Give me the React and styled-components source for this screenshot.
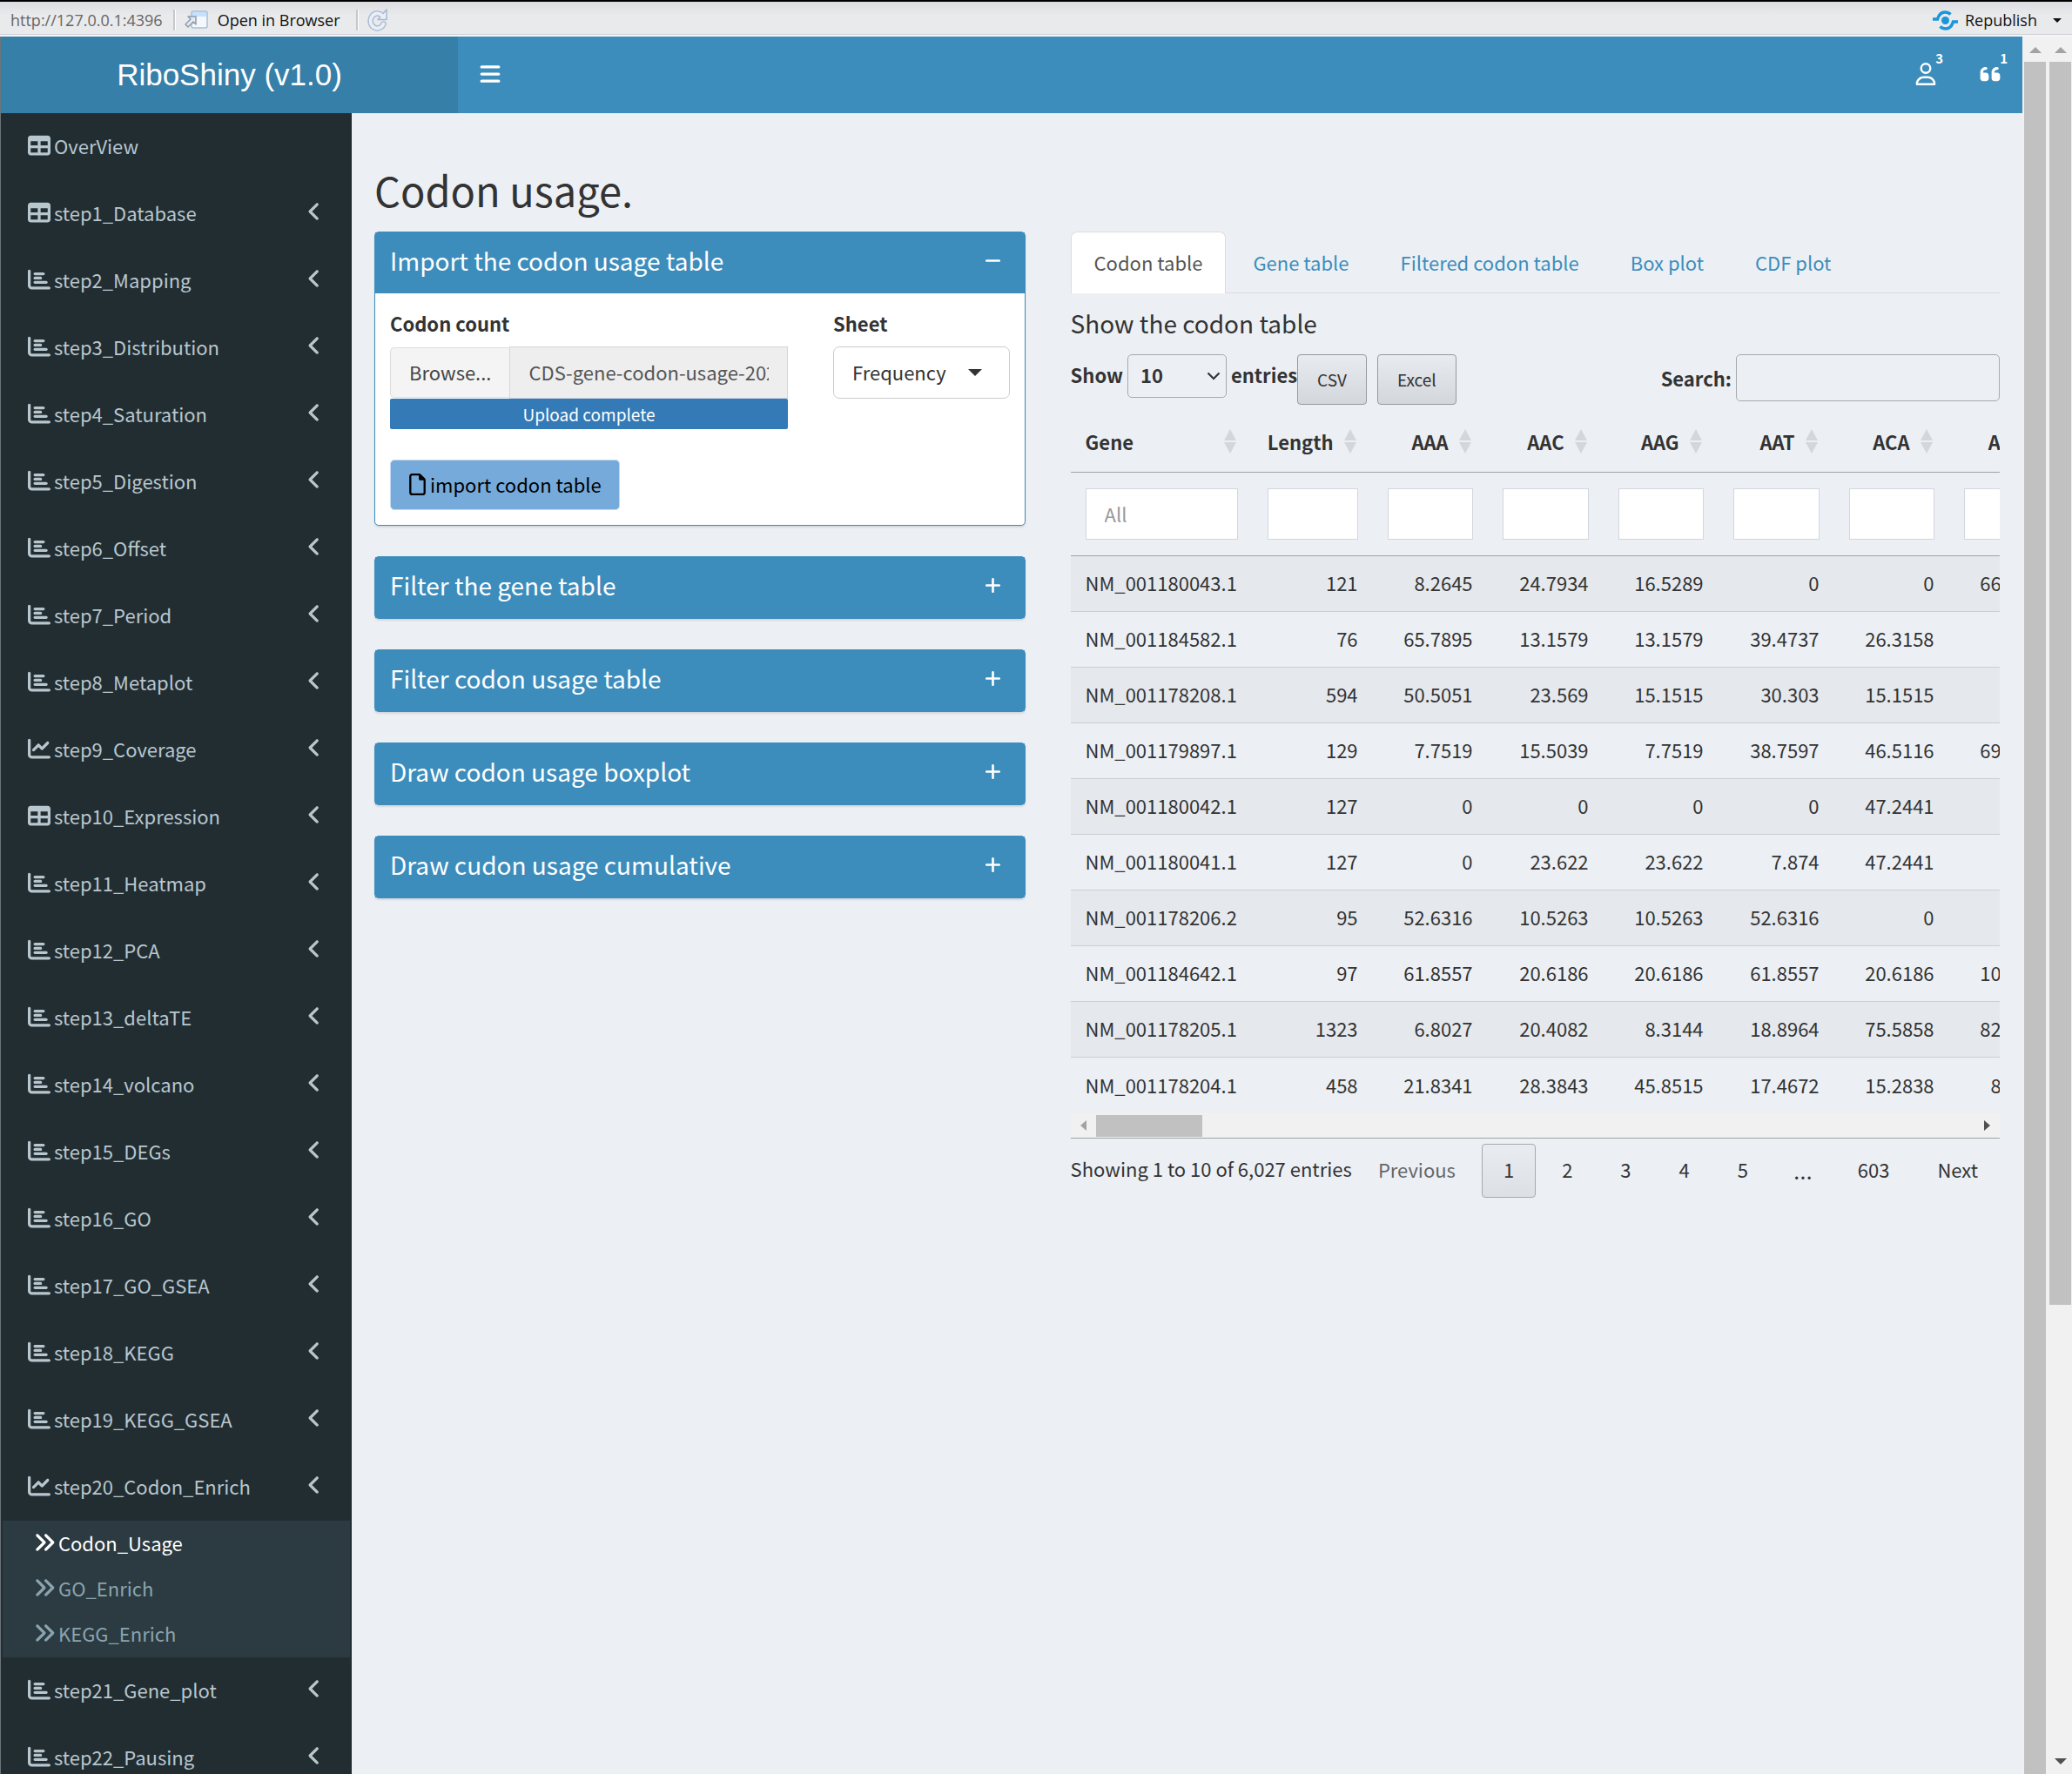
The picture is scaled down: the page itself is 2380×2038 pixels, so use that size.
import React from "react";
import styled, { createGlobalStyle, css } from "styled-components";
import {
  FaTable,
  FaChartBar,
  FaChartLine,
  FaAngleLeft,
  FaAnglesRight,
  FaBars,
  FaRegUser,
  FaQuoteLeft,
  FaMinus,
  FaPlus,
  FaRegFile,
} from "react-icons/fa6";

const sans = `"Noto Sans CJK SC", "Noto Sans", sans-serif`;

const GlobalStyle = createGlobalStyle`
  *, *::before, *::after { box-sizing: border-box; }
  body {
    margin: 0;
    background: #ecf0f5;
    color: #333;
    font-family: ${sans};
    font-size: 22px;
    line-height: 35px;
  }
  button, input, select { font: inherit; color: inherit; margin: 0; }
  a { text-decoration: none; }
`;

/* ---------- window frame ---------- */

const Window = styled.div`
  height: 100vh;
  display: flex;
  flex-direction: column;
  overflow: hidden;
  border-top: 2px solid #000;
`;

const Toolbar = styled.div`
  flex: none;
  display: flex;
  align-items: center;
  height: 40px;
  padding: 4px 12px 0 12px;
  background: linear-gradient(#dcdde1, #e9eaec 40%, #e9eaec);
  border-bottom: 2px solid #f4f5f7;
  box-shadow: inset 0 -1px 0 #cfd0d3;
  font-family: "Open Sans", sans-serif;
  font-size: 18px;
  line-height: 28px;
  color: #111;
`;

const Address = styled.span`
  color: #666;
`;

const Divider = styled.span`
  width: 3px;
  height: 24px;
  margin: 0 10px 0 12px;
  border-left: 2px solid #c6c7ca;
  border-right: 1px solid #fff;
`;

const ToolButton = styled.button`
  display: flex;
  align-items: center;
  gap: ${(p) => p.$gap || 10}px;
  height: 32px;
  padding: ${(p) => (p.$end ? 0 : "0 6px 0 0")};
  border: 0;
  background: none;
  margin-left: ${(p) => (p.$end ? "auto" : 0)};
`;

const Caret = styled.span`
  width: 0;
  height: 0;
  margin-left: ${(p) => p.$gap || 0}px;
  border: ${(p) => p.$size || 5}px solid transparent;
  border-top-color: currentColor;
  border-bottom: 0;
`;

const Body = styled.div`
  flex: 1;
  min-height: 0;
  display: flex;
`;

const Dashboard = styled.div`
  flex: 1;
  min-width: 0;
  display: flex;
  flex-direction: column;
  border-left: 1px solid #6b7478;
`;

/* ---------- scroll bars ---------- */

const VScroll = styled.div`
  flex: none;
  width: ${(p) => p.$width}px;
  padding: 12px 1px ${(p) => (p.$cut ? 0 : 11)}px ${(p) => p.$width - 26}px;
  display: flex;
  flex-direction: column;
  align-items: center;
  background: #f1f1f1;
`;

const VThumb = styled.div`
  width: 25px;
  flex: ${(p) => p.$grow} 0 0;
  margin-top: 10px;
  background: #c1c1c1;
`;

const VRest = styled.div`
  flex: ${(p) => p.$grow} 0 0;
`;

const ArrowUp = styled.span`
  border: 7px solid transparent;
  border-bottom-color: #a3a3a3;
  border-top: 0;
`;

const ArrowDown = styled.span`
  border: 7px solid transparent;
  border-top-color: #505050;
  border-bottom: 0;
`;

/* ---------- header ---------- */

const Header = styled.header`
  flex: none;
  display: flex;
  height: 88px;
  background: #3c8dbc;
  color: #fff;
`;

const Logo = styled.a`
  width: 525px;
  background: #367fa9;
  color: #fff;
  text-align: center;
  font: 35px/88px "Liberation Sans", Arial, sans-serif;
`;

const NavButton = styled.button`
  position: relative;
  display: flex;
  align-items: center;
  padding: 0 24px 2px;
  border: 0;
  background: none;
  color: #fff;
  font-size: 26px;
`;

const NavRight = styled.nav`
  display: flex;
  margin-left: auto;
`;

const Badge = styled.span`
  position: absolute;
  top: 15px;
  right: 17px;
  font-size: 15px;
  line-height: 20px;
  font-weight: 700;
`;

const Main = styled.div`
  flex: 1;
  min-height: 0;
  display: flex;
`;

/* ---------- sidebar ---------- */

const Sidebar = styled.nav`
  flex: none;
  width: 403px;
  overflow: hidden;
  background: #222d32;
`;

const Menu = styled.ul`
  list-style: none;
  margin: 0;
  padding: 0;
`;

const MenuLink = styled.a`
  display: flex;
  align-items: center;
  gap: 4px;
  height: 77px;
  padding: 0 30px 3px 31px;
  color: #b8c7ce;

  svg { flex: none; font-size: 26px; }
  span { flex: 1; }
  span + svg { margin-bottom: 3px; }
`;

const SubMenu = styled.ul`
  list-style: none;
  margin: 0 2px;
  padding: 0 0 1px;
  background: #2c3b41;
`;

const SubLink = styled.a`
  display: flex;
  align-items: center;
  gap: 3px;
  height: 52px;
  padding: 0 0 2px 35px;
  color: ${(p) => (p.$active ? "#fff" : "#8aa4af")};

  svg { font-size: 26px; }
`;

/* ---------- content ---------- */

const Content = styled.main`
  flex: 1;
  min-width: 0;
  padding-top: 59px;
`;

const PageTitle = styled.h2`
  margin: 0;
  padding: 0 26px;
  font-size: 47px;
  line-height: 58px;
  font-weight: 400;
`;

const Columns = styled.div`
  display: grid;
  grid-template-columns: 5fr 7fr;
  padding-top: 19px;
`;

const Column = styled.div`
  min-width: 0;
  padding: 0 26px;
`;

const Box = styled.section`
  margin-bottom: 35px;
  border: 1px solid #3c8dbc;
  border-radius: 5px;
  background: #fff;
  box-shadow: 0 2px 2px rgba(0, 0, 0, 0.1);
`;

const BoxHeader = styled.div`
  display: flex;
  justify-content: space-between;
  align-items: center;
  height: 70px;
  padding: 0 26px 5px 17px;
  background: #3c8dbc;
  color: #fff;
`;

const BoxTitle = styled.h3`
  margin: 0;
  padding-bottom: 2px;
  font-size: 28px;
  line-height: 36px;
  font-weight: 400;
`;

const BoxTool = styled.button`
  display: flex;
  padding: 0;
  border: 0;
  background: none;
  color: #fff;
  font-size: 21px;
`;

const BoxBody = styled.div`
  padding: 17px;
`;

const FormRow = styled.div`
  display: grid;
  grid-template-columns: 2fr 1fr;
  margin: 0 -26px 35px;
`;

const Field = styled.div`
  min-width: 0;
  padding: 0 26px;
`;

const Label = styled.label`
  display: block;
  margin-bottom: 9px;
  font-weight: 700;
`;

const FileGroup = styled.div`
  display: flex;
  align-items: center;
`;

const Browse = styled.button`
  height: 58px;
  padding: 0 21px 2px;
  border: 1px solid #ddd;
  border-right: 0;
  border-radius: 5px 0 0 5px;
  background: #f4f4f4;
  color: #444;
`;

const FileName = styled.input`
  flex: 1;
  min-width: 0;
  height: 60px;
  padding: 0 21px 2px;
  border: 1px solid #d2d6de;
  border-radius: 0;
  background: #eee;
  color: #555;
`;

const Progress = styled.div`
  height: 35px;
  border-radius: 2px;
  background: #337ab7;
  color: #fff;
  text-align: center;
  font-size: 19px;
`;

const SelectWrap = styled.div`
  position: relative;
  display: ${(p) => (p.$inline ? "inline-block" : "block")};
`;

const SelectMark = styled.span`
  position: absolute;
  top: 0;
  bottom: 0;
  right: ${(p) => p.$right}px;
  display: flex;
  align-items: center;
  pointer-events: none;
`;

const SheetSelect = styled.select`
  width: 100%;
  height: 60px;
  padding: 0 21px 2px;
  border: 1px solid #ccc;
  border-radius: 7px;
  background: #fff;
  appearance: none;
`;

const ImportButton = styled.button`
  display: flex;
  align-items: center;
  gap: 2px;
  height: 58px;
  padding: 0 20px 2px 18px;
  border: 1px solid #c3d9ef;
  border-radius: 5px;
  background: #75aadb;
  color: #000;

  svg { font-size: 25px; }
`;

/* ---------- tabs ---------- */

const Tabs = styled.div`
  display: flex;
  gap: 3px;
  border-bottom: 1px solid #d9dce1;
`;

const Tab = styled.button`
  height: 71px;
  padding: 0 26px 2px;
  margin-bottom: -1px;
  border: 1px solid transparent;
  border-bottom: 0;
  border-radius: 7px 7px 0 0;
  background: none;
  color: #3c8dbc;
  & + & { padding: 0 27px 2px; }
  ${(p) =>
    p.$active &&
    css`
      border-color: #ddd;
      background: #fff;
      color: #555;
    `}
`;

const Subtitle = styled.h4`
  margin: 15px 0 17px;
  font-size: 28px;
  line-height: 38px;
  font-weight: 400;
`;

/* ---------- data table ---------- */

const Controls = styled.div`
  display: flex;
  align-items: flex-start;
  height: 66px;
  font-weight: 700;
`;

const LengthLabel = styled.label`
  display: flex;
  align-items: baseline;
  gap: 5px;
`;

const LengthSelect = styled.select`
  display: block;
  width: 114px;
  height: 50px;
  padding: 0 14px 3px;
  border: 1px solid #a6a9ad;
  border-radius: 5px;
  background: none;
  appearance: none;
`;

const ExportButton = styled.button`
  height: 58px;
  padding: 0 22px 2px;
  margin-right: 12px;
  border: 1px solid #96999d;
  border-radius: 4px;
  background: linear-gradient(#e8ebf0, #d3d6db);
  font-size: 19px;
  font-weight: 400;
`;

const SearchLabel = styled.label`
  display: flex;
  align-items: center;
  gap: 5px;
  margin-left: auto;
`;

const SearchInput = styled.input`
  width: 303px;
  height: 54px;
  padding: 0 9px;
  border: 1px solid #a6a9ad;
  border-radius: 5px;
  background: none;
`;

const TableWindow = styled.div`
  overflow: hidden;
`;

const Table = styled.table`
  width: 0;
  table-layout: fixed;
  border-collapse: separate;
  border-spacing: 0;
`;

const Col = styled.col`
  width: ${(p) => p.$width}px;
`;

const Th = styled.th`
  height: 70px;
  padding: 0 19px 1px 17px;
  border-bottom: 1px solid #a0a3a8;
`;

const ThInner = styled.div`
  display: flex;
  align-items: center;
  justify-content: ${(p) => (p.$left ? "space-between" : "flex-end")};
  gap: 12px;
`;

const Sort = styled.span`
  display: flex;
  flex-direction: column;
  gap: 2px;

  &::before, &::after {
    content: "";
    border: 7px solid transparent;
  }
  &::before { border-top: 0; border-bottom: 13px solid #d3d6db; }
  &::after { border-bottom: 0; border-top: 13px solid #d3d6db; }
`;

const FilterCell = styled.td`
  height: 96px;
  padding: 0 17px;
  border-bottom: 1px solid #a0a3a8;
`;

const FilterInput = styled.input`
  display: block;
  width: 100%;
  height: 59px;
  padding: 0 21px 2px;
  border: 1px solid #d2d6de;
  border-radius: 0;
  background: #fff;
  &::placeholder { color: #999; opacity: 1; }
`;

const Tr = styled.tr`
  background: ${(p) => (p.$odd ? "#e5e9ed" : "transparent")};
`;

const Td = styled.td`
  height: 64px;
  padding: 0 17px 2px;
  border-bottom: ${(p) => (p.$last ? 0 : 1)}px solid #cbced3;
  text-align: ${(p) => (p.$left ? "left" : "right")};
`;

const HScroll = styled.div`
  display: flex;
  align-items: center;
  gap: 11px;
  height: 28px;
  padding: 0 11px;
  background: #f1f1f1;
`;

const HThumb = styled.div`
  width: 122px;
  height: 25px;
  margin-right: auto;
  background: #c1c1c1;
`;

const ArrowSide = styled.span`
  border: 6px solid transparent;
  ${(p) =>
    p.$right
      ? "border-left: 7px solid #505050; border-right: 0;"
      : "border-right: 7px solid #a3a3a3; border-left: 0;"}
`;

const TableFooter = styled.div`
  display: flex;
  justify-content: space-between;
  align-items: center;
  padding-top: 6px;
  border-top: 1px solid #a0a3a7;
`;

const Info = styled.span`
  padding-bottom: 6px;
`;

const Pager = styled.div`
  display: flex;
  align-items: center;
  gap: 5px;
`;

const Page = styled.button`
  height: 62px;
  padding: 0 24px 3px;
  border: 1px solid transparent;
  border-radius: 4px;
  background: none;
  color: ${(p) => (p.disabled ? "#666" : "#333")};
  ${(p) =>
    p.$current &&
    css`
      border-color: #a6a9ad;
      background: linear-gradient(#e9ecf1, #dcdfe4);
    `}
`;

const Ellipsis = styled.span`
  padding: 0 22px 2px;
  font-family: "Open Sans", sans-serif;
  font-size: 28px;
`;

/* ---------- drawings ---------- */

const OpenIcon = () => (
  <svg width="28" height="22" viewBox="0 0 28 22">
    <rect x="8" y="1" width="18" height="19" rx="2" fill="#f4f8fc" stroke="#a9bdd4" strokeWidth="1.5" />
    <path d="M9 2h16v5H9z" fill="#c4e2fb" />
    <path
      d="M4 7h9v9l-3-3-6 6-3-3 6-6z"
      fill="#e6ebf0"
      stroke="#8e9cad"
      strokeWidth="1.5"
      strokeLinejoin="round"
    />
  </svg>
);

const ReloadIcon = () => (
  <svg width="26" height="28" viewBox="0 0 26 28">
    <path
      d="M16.5 8.500A7.800 8.500 0 1 0 18.500 18.500"
      fill="none"
      stroke="#a9b8cf"
      strokeWidth="6.5"
      strokeLinecap="round"
    />
    <path
      d="M22 2v11.500H12l3.500-4z"
      fill="#e8eff9"
      stroke="#a9b8cf"
      strokeWidth="1.5"
      strokeLinejoin="round"
    />
    <path
      d="M16.5 8.500A7.800 8.500 0 1 0 18.500 18.500"
      fill="none"
      stroke="#e8eff9"
      strokeWidth="3.8"
      strokeLinecap="round"
    />
  </svg>
);

const PublishIcon = () => (
  <svg width="29" height="23" viewBox="0 0 29 23">
    <circle cx="14.5" cy="11.5" r="4.5" fill="#1a96dc" />
    <path
      d="M0 10h5.500C7 5 10 2 14 2c3 0 5 1 6.500 2.500M29 13h-5.500C22 18 19 21 15 21c-3 0-5-1-6.500-2.500"
      fill="none"
      stroke="#1a96dc"
      strokeWidth="3.5"
    />
  </svg>
);

const DownMark = () => (
  <svg width="16" height="10" viewBox="0 0 16 10">
    <path d="M1.500 1.500L8 8l6.500-6.500" fill="none" stroke="#333" strokeWidth="2.2" />
  </svg>
);

/* ---------- data ---------- */

const menu = [
  ["OverView", FaTable],
  ["step1_Database", FaTable],
  ["step2_Mapping", FaChartBar],
  ["step3_Distribution", FaChartBar],
  ["step4_Saturation", FaChartBar],
  ["step5_Digestion", FaChartBar],
  ["step6_Offset", FaChartBar],
  ["step7_Period", FaChartBar],
  ["step8_Metaplot", FaChartBar],
  ["step9_Coverage", FaChartLine],
  ["step10_Expression", FaTable],
  ["step11_Heatmap", FaChartBar],
  ["step12_PCA", FaChartBar],
  ["step13_deltaTE", FaChartBar],
  ["step14_volcano", FaChartBar],
  ["step15_DEGs", FaChartBar],
  ["step16_GO", FaChartBar],
  ["step17_GO_GSEA", FaChartBar],
  ["step18_KEGG", FaChartBar],
  ["step19_KEGG_GSEA", FaChartBar],
  ["step20_Codon_Enrich", FaChartLine, ["Codon_Usage", "GO_Enrich", "KEGG_Enrich"]],
  ["step21_Gene_plot", FaChartBar],
  ["step22_Pausing", FaChartBar],
];

const closedBoxes = [
  "Filter the gene table",
  "Filter codon usage table",
  "Draw codon usage boxplot",
  "Draw cudon usage cumulative",
];

const tabs = ["Codon table", "Gene table", "Filtered codon table", "Box plot", "CDF plot"];

const columns = [
  ["Gene", 209],
  ["Length", 138],
  ["AAA", 132],
  ["AAC", 133],
  ["AAG", 132],
  ["AAT", 133],
  ["ACA", 132],
  ["ACC", 132],
];

const rows = [
  ["NM_001180043.1", "121", "8.2645", "24.7934", "16.5289", "0", "0", "66.1157"],
  ["NM_001184582.1", "76", "65.7895", "13.1579", "13.1579", "39.4737", "26.3158", ""],
  ["NM_001178208.1", "594", "50.5051", "23.569", "15.1515", "30.303", "15.1515", ""],
  ["NM_001179897.1", "129", "7.7519", "15.5039", "7.7519", "38.7597", "46.5116", "69.7674"],
  ["NM_001180042.1", "127", "0", "0", "0", "0", "47.2441", ""],
  ["NM_001180041.1", "127", "0", "23.622", "23.622", "7.874", "47.2441", ""],
  ["NM_001178206.2", "95", "52.6316", "10.5263", "10.5263", "52.6316", "0", ""],
  ["NM_001184642.1", "97", "61.8557", "20.6186", "20.6186", "61.8557", "20.6186", "10.3093"],
  ["NM_001178205.1", "1323", "6.8027", "20.4082", "8.3144", "18.8964", "75.5858", "82.3885"],
  ["NM_001178204.1", "458", "21.8341", "28.3843", "45.8515", "17.4672", "15.2838", "8.7336"],
];

/* ---------- page ---------- */

function MenuEntry({ label, Icon, items }) {
  return (
    <li>
      <MenuLink href="#">
        <Icon />
        <span>{label}</span>
        {label !== "OverView" && <FaAngleLeft />}
      </MenuLink>
      {items && (
        <SubMenu>
          {items.map((item, i) => (
            <li key={item}>
              <SubLink href="#" $active={i === 0}>
                <FaAnglesRight />
                {item}
              </SubLink>
            </li>
          ))}
        </SubMenu>
      )}
    </li>
  );
}

function ImportBox() {
  return (
    <Box>
      <BoxHeader>
        <BoxTitle>Import the codon usage table</BoxTitle>
        <BoxTool aria-label="Collapse"><FaMinus /></BoxTool>
      </BoxHeader>
      <BoxBody>
        <FormRow>
          <Field>
            <Label htmlFor="codon-file">Codon count</Label>
            <FileGroup>
              <Browse>Browse...</Browse>
              <FileName id="codon-file" readOnly value="CDS-gene-codon-usage-2023.xlsx" />
            </FileGroup>
            <Progress>Upload complete</Progress>
          </Field>
          <Field>
            <Label htmlFor="sheet">Sheet</Label>
            <SelectWrap>
              <SheetSelect id="sheet" defaultValue="Frequency">
                <option>Frequency</option>
              </SheetSelect>
              <SelectMark $right={32}><Caret $size={8} /></SelectMark>
            </SelectWrap>
          </Field>
        </FormRow>
        <ImportButton><FaRegFile />import codon table</ImportButton>
      </BoxBody>
    </Box>
  );
}

function CodonTable() {
  return (
    <>
      <Controls>
        <LengthLabel>
          Show
          <SelectWrap $inline>
            <LengthSelect defaultValue="10"><option>10</option></LengthSelect>
            <SelectMark $right={7}><DownMark /></SelectMark>
          </SelectWrap>
          entries
        </LengthLabel>
        <ExportButton>CSV</ExportButton>
        <ExportButton>Excel</ExportButton>
        <SearchLabel>Search:<SearchInput type="search" /></SearchLabel>
      </Controls>
      <TableWindow>
        <Table>
          <colgroup>
            {columns.map(([name, width]) => <Col key={name} $width={width} />)}
          </colgroup>
          <thead>
            <tr>
              {columns.map(([name], i) => (
                <Th key={name}>
                  <ThInner $left={i === 0}>{name}<Sort /></ThInner>
                </Th>
              ))}
            </tr>
            <tr>
              {columns.map(([name], i) => (
                <FilterCell key={name}>
                  <FilterInput aria-label={"Filter " + name} placeholder={i === 0 ? "All" : undefined} />
                </FilterCell>
              ))}
            </tr>
          </thead>
          <tbody>
            {rows.map((row, r) => (
              <Tr key={row[0]} $odd={r % 2 === 0}>
                {row.map((cell, c) => (
                  <Td key={c} $left={c === 0} $last={r === rows.length - 1}>{cell}</Td>
                ))}
              </Tr>
            ))}
          </tbody>
        </Table>
      </TableWindow>
      <HScroll>
        <ArrowSide />
        <HThumb />
        <ArrowSide $right />
      </HScroll>
      <TableFooter>
        <Info>Showing 1 to 10 of 6,027 entries</Info>
        <Pager>
          <Page disabled>Previous</Page>
          <Page $current>1</Page>
          <Page>2</Page>
          <Page>3</Page>
          <Page>4</Page>
          <Page>5</Page>
          <Ellipsis>…</Ellipsis>
          <Page>603</Page>
          <Page>Next</Page>
        </Pager>
      </TableFooter>
    </>
  );
}

export default function App() {
  return (
    <Window>
      <GlobalStyle />
      <Toolbar>
        <Address>http://127.0.0.1:4396</Address>
        <Divider />
        <ToolButton><OpenIcon />Open in Browser</ToolButton>
        <Divider />
        <ToolButton aria-label="Reload"><ReloadIcon /></ToolButton>
        <ToolButton $end $gap={8}><PublishIcon />Republish<Caret $gap={10} /></ToolButton>
      </Toolbar>
      <Body>
        <Dashboard>
          <Header>
            <Logo href="#">RiboShiny (v1.0)</Logo>
            <NavButton aria-label="Toggle navigation"><FaBars /></NavButton>
            <NavRight>
              <NavButton aria-label="Authors"><FaRegUser /><Badge>3</Badge></NavButton>
              <NavButton aria-label="Citation"><FaQuoteLeft /><Badge>1</Badge></NavButton>
            </NavRight>
          </Header>
          <Main>
            <Sidebar>
              <Menu>
                {menu.map(([label, Icon, items]) => (
                  <MenuEntry key={label} label={label} Icon={Icon} items={items} />
                ))}
              </Menu>
            </Sidebar>
            <Content>
              <PageTitle>Codon usage.</PageTitle>
              <Columns>
                <Column>
                  <ImportBox />
                  {closedBoxes.map((title) => (
                    <Box key={title}>
                      <BoxHeader>
                        <BoxTitle>{title}</BoxTitle>
                        <BoxTool aria-label="Expand"><FaPlus /></BoxTool>
                      </BoxHeader>
                    </Box>
                  ))}
                </Column>
                <Column>
                  <Tabs role="tablist">
                    {tabs.map((tab, i) => (
                      <Tab key={tab} role="tab" $active={i === 0}>{tab}</Tab>
                    ))}
                  </Tabs>
                  <Subtitle>Show the codon table</Subtitle>
                  <CodonTable />
                </Column>
              </Columns>
            </Content>
          </Main>
        </Dashboard>
        <VScroll $width={28} $cut>
          <ArrowUp />
          <VThumb $grow={1} />
        </VScroll>
        <VScroll $width={29}>
          <ArrowUp />
          <VThumb $grow={1429} />
          <VRest $grow={521} />
          <ArrowDown />
        </VScroll>
      </Body>
    </Window>
  );
}
